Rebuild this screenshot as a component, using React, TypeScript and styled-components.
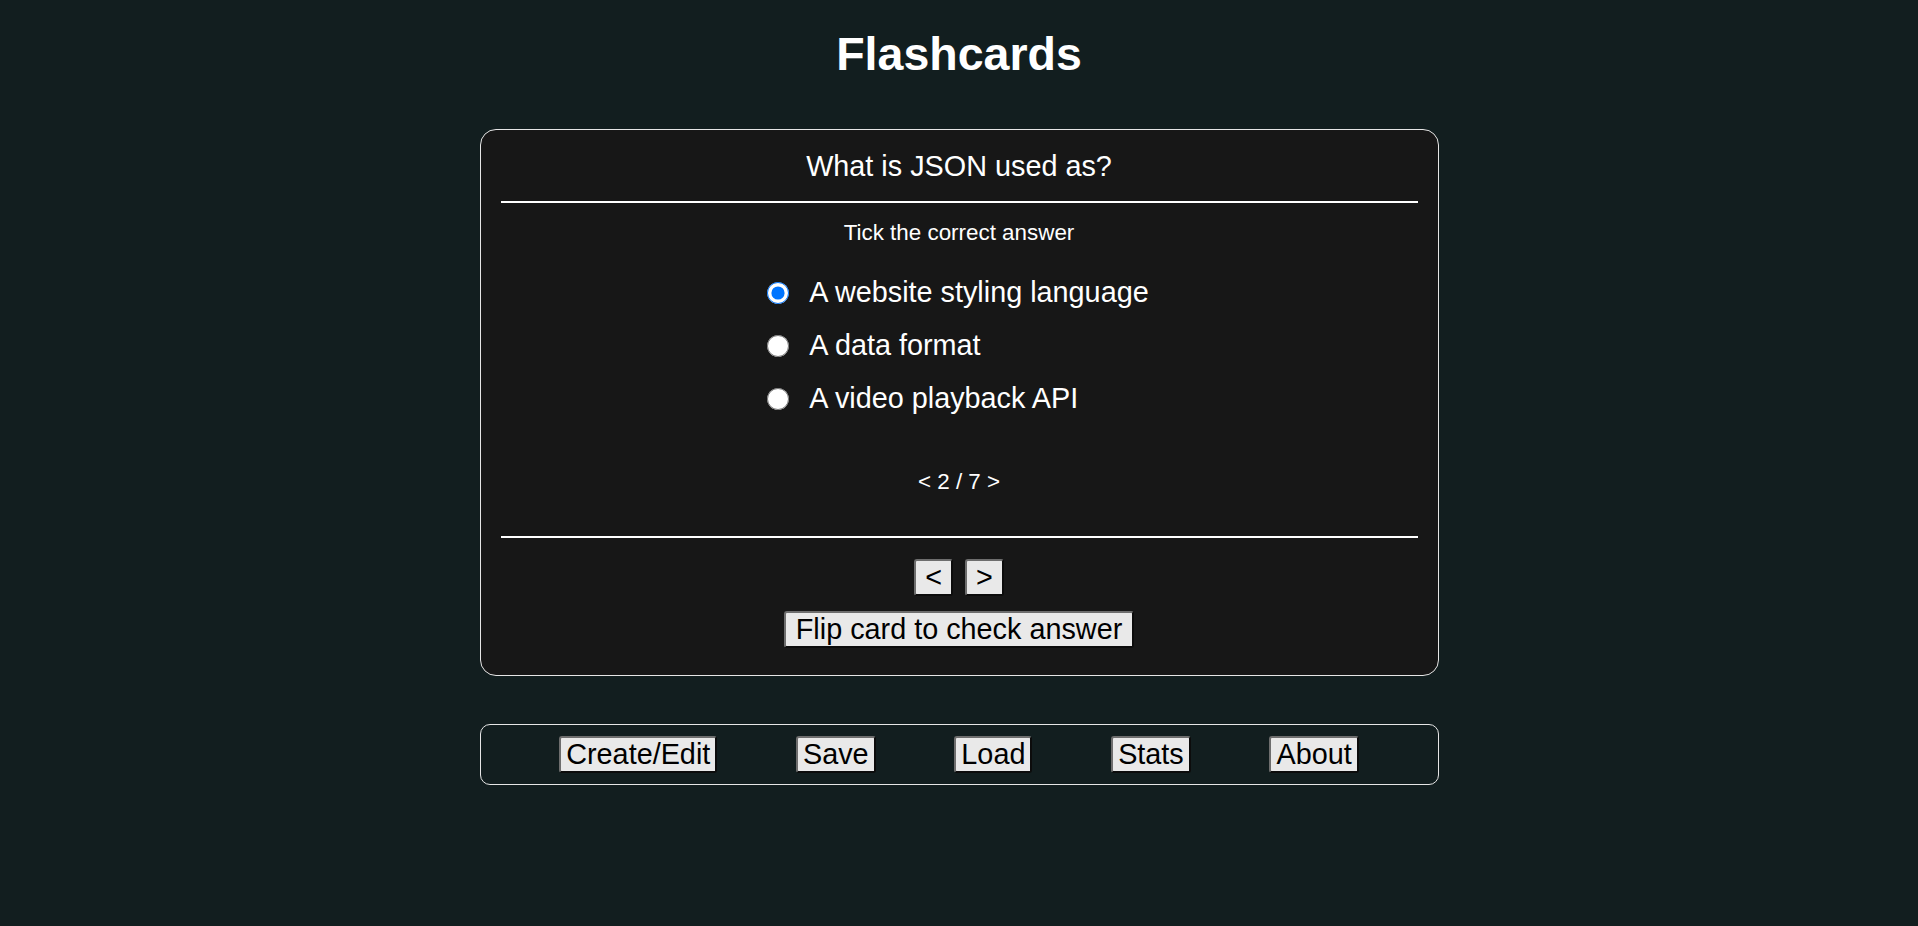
import React, { useState } from "react";
import styled, { createGlobalStyle } from "styled-components";

const GlobalStyle = createGlobalStyle`
  html, body {
    margin: 0;
    padding: 0;
    background: #121e1f;
  }
  body {
    font-family: "Liberation Sans", Arial, sans-serif;
    color: #ffffff;
  }
  * { box-sizing: border-box; }
`;

const Page = styled.main`
  display: flex;
  flex-direction: column;
  align-items: center;
  min-height: 926px;
  padding-top: 28px;
`;

const Title = styled.h1`
  margin: 0;
  font-size: 46.5px;
  line-height: 53px;
  font-weight: 700;
  color: #ffffff;
`;

const Card = styled.section`
  margin-top: 48px;
  width: 959px;
  background: #171717;
  border: 1px solid #e6e6e6;
  border-radius: 16px;
  padding: 20px 20px 27px;
  display: flex;
  flex-direction: column;
  align-items: stretch;
`;

const Question = styled.h2`
  margin: 0;
  font-size: 28.8px;
  line-height: 33px;
  font-weight: 400;
  text-align: center;
`;

const Divider = styled.div<{ $top: number }>`
  margin-top: ${(p) => p.$top}px;
  height: 2px;
  background: #ffffff;
`;

const Hint = styled.p<{ $top: number }>`
  margin: ${(p) => p.$top}px 0 0;
  font-size: 22.4px;
  line-height: 26px;
  text-align: center;
`;

const Options = styled.div`
  margin-top: 30px;
  align-self: center;
  display: flex;
  flex-direction: column;
  align-items: flex-start;
  gap: 20px;
`;

const OptionRow = styled.label`
  display: flex;
  align-items: center;
  gap: 20px;
  font-size: 28.8px;
  line-height: 33px;
  cursor: pointer;
`;

const Radio = styled.input`
  margin: 0 0 0 -2px;
  width: 22px;
  height: 22px;
  accent-color: #0075ff;
`;

const NavRow = styled.div`
  margin-top: 21px;
  display: flex;
  justify-content: center;
  gap: 12px;
`;

const Button = styled.button<{ $pad: number }>`
  font-family: "Liberation Sans", Arial, sans-serif;
  font-size: 28.8px;
  line-height: 33px;
  color: #000000;
  background: #e9e9e9;
  border: 2px solid;
  border-color: #6e6e6e #0c0c0c #0c0c0c #6e6e6e;
  border-radius: 3px;
  padding: 0 ${(p) => p.$pad}px;
  cursor: pointer;
`;

const FlipRow = styled.div`
  margin-top: 15px;
  display: flex;
  justify-content: center;
`;

const Footer = styled.nav`
  margin-top: 48px;
  width: 959px;
  border: 1px solid #e6e6e6;
  border-radius: 10px;
  padding: 11px 0;
  display: flex;
  justify-content: space-evenly;
`;

const options = [
  "A website styling language",
  "A data format",
  "A video playback API",
];

const menu = ["Create/Edit", "Save", "Load", "Stats", "About"];

export default function App() {
  const [selected, setSelected] = useState(0);
  return (
    <>
      <GlobalStyle />
      <Page>
        <Title>Flashcards</Title>
        <Card>
          <Question>What is JSON used as?</Question>
          <Divider $top={18} />
          <Hint $top={17}>Tick the correct answer</Hint>
          <Options>
            {options.map((o, i) => (
              <OptionRow key={o} htmlFor={`opt-${i}`}>
                <Radio
                  id={`opt-${i}`}
                  type="radio"
                  name="answer"
                  checked={selected === i}
                  onChange={() => setSelected(i)}
                />
                {o}
              </OptionRow>
            ))}
          </Options>
          <Hint $top={54}>&lt; 2 / 7 &gt;</Hint>
          <Divider $top={41} />
          <NavRow>
            <Button $pad={9}>&lt;</Button>
            <Button $pad={9}>&gt;</Button>
          </NavRow>
          <FlipRow>
            <Button $pad={10}>Flip card to check answer</Button>
          </FlipRow>
        </Card>
        <Footer>
          {menu.map((m) => (
            <Button key={m} $pad={5}>
              {m}
            </Button>
          ))}
        </Footer>
      </Page>
    </>
  );
}
